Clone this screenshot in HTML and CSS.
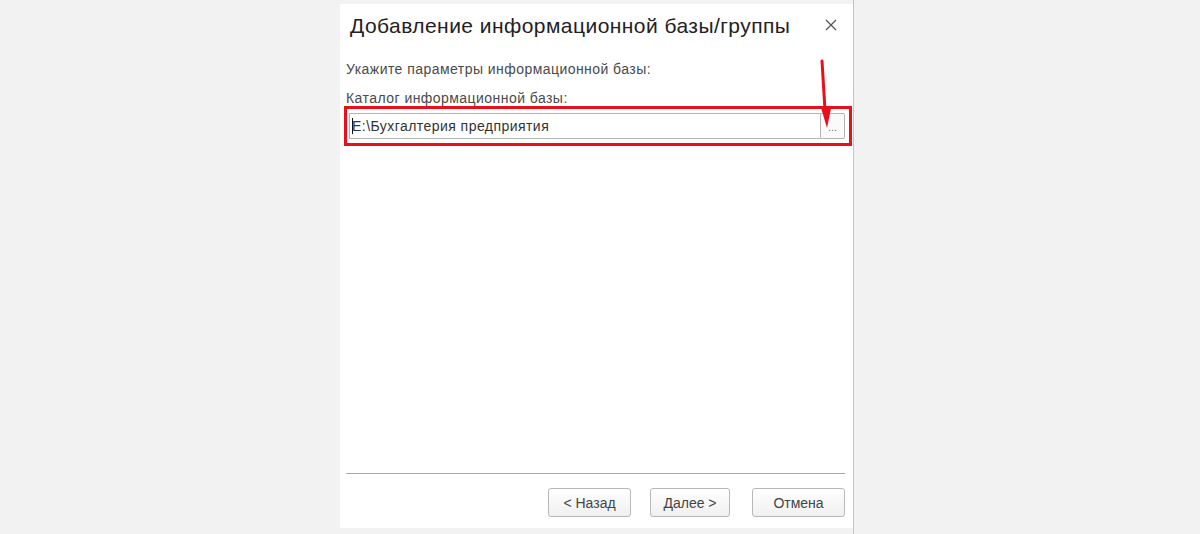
FILE: index.html
```html
<!DOCTYPE html>
<html lang="ru">
<head>
<meta charset="utf-8">
<title>Добавление информационной базы/группы</title>
<link rel="stylesheet" href="styles.css">
</head>
<body>
<div class="frame">
  <div class="dialog">
    <div class="header">
      <h1 class="title">Добавление информационной базы/группы</h1>
      <svg class="close" width="14" height="14" viewBox="0 0 14 14"><path d="M2 2 L12 12 M12 2 L2 12" stroke="#555" stroke-width="1.3" fill="none"/></svg>
    </div>
    <div class="body">
      <div class="hint">Укажите параметры информационной базы:</div>
      <div class="label">Каталог информационной базы:</div>
      <div class="highlight">
        <div class="field">
          <div class="input"><span class="caret"></span>E:\Бухгалтерия предприятия</div>
          <div class="choose">...</div>
        </div>
      </div>
      <svg class="arrow" width="24" height="76" viewBox="0 0 24 76"><path d="M8 3 L11 52" stroke="#e8101a" stroke-width="3" fill="none" stroke-linecap="round"/><path d="M6.5 48 L17.5 48 L13 70 Z" fill="#e8101a"/></svg>
    </div>
    <div class="footer">
      <div class="sep"></div>
      <div class="buttons">
        <button class="btn btn-back">&lt; Назад</button>
        <button class="btn btn-next">Далее &gt;</button>
        <button class="btn btn-cancel">Отмена</button>
      </div>
    </div>
  </div>
</div>
</body>
</html>
```
FILE: styles.css
```css
html, body {
  margin: 0;
  padding: 0;
}
body {
  background: #f2f2f2;
  font-family: "Liberation Sans", Arial, sans-serif;
  width: 1200px;
  height: 534px;
  overflow: hidden;
}
.frame {
  margin-left: 340px;
  width: 514px;
  height: 534px;
  border-right: 1px solid #c4c4c4;
  padding: 4px 0 6px 0;
  box-sizing: border-box;
}
.dialog {
  background: #fff;
  height: 100%;
  display: flex;
  flex-direction: column;
  position: relative;
}
.header {
  display: flex;
  align-items: center;
  justify-content: space-between;
  padding: 5px 15px 0 10px;
  height: 34px;
}
.title {
  margin: 0;
  font-weight: normal;
  font-size: 21px;
  color: #222;
  letter-spacing: 0.45px;
}
.close {
  margin-top: -2px;
}
.body {
  flex: 1;
  padding: 18px 0 0 6px;
  position: relative;
}
.hint, .label {
  font-size: 14px;
  color: #4a4a4a;
  line-height: 16px;
  letter-spacing: 0.45px;
}
.label {
  margin-top: 13px;
}
.highlight {
  margin-top: 0;
  margin-left: -2px;
  width: 508px;
  height: 40px;
  border: 3px solid #e8101a;
  box-sizing: border-box;
  padding: 4px 4px 0 2px;
}
.field {
  display: flex;
  height: 26px;
}
.input {
  flex: 1;
  border: 1px solid #b4b4b4;
  border-right: none;
  font-size: 14px;
  color: #333;
  line-height: 24px;
  padding-left: 2px;
  display: flex;
  align-items: center;
  letter-spacing: 0.45px;
}
.caret {
  width: 1px;
  height: 16px;
  background: #111;
  margin-right: -1px;
}
.choose {
  width: 23px;
  border: 1px solid #b4b4b4;
  border-radius: 0 2px 2px 0;
  font-size: 11px;
  color: #777;
  text-align: center;
  line-height: 26px;
  background: #fafafa;
}
.arrow {
  position: absolute;
  left: 474px;
  top: 15px;
}
.footer {
  padding: 0 8px 11px 6px;
}
.sep {
  height: 1px;
  background: #a8a8a8;
}
.buttons {
  display: flex;
  justify-content: flex-end;
  gap: 20px;
  margin-top: 14px;
}
.btn {
  height: 29px;
  border: 1px solid #b8b8b8;
  border-radius: 3px;
  background: linear-gradient(#ffffff, #f0f0f0);
  font-family: "Liberation Sans", Arial, sans-serif;
  font-size: 14px;
  color: #444;
  padding: 0;
}
.btn-back { width: 83px; }
.btn-next { width: 80px; margin-left: -1px; }
.btn-cancel { width: 93px; margin-left: 2px; }
```
